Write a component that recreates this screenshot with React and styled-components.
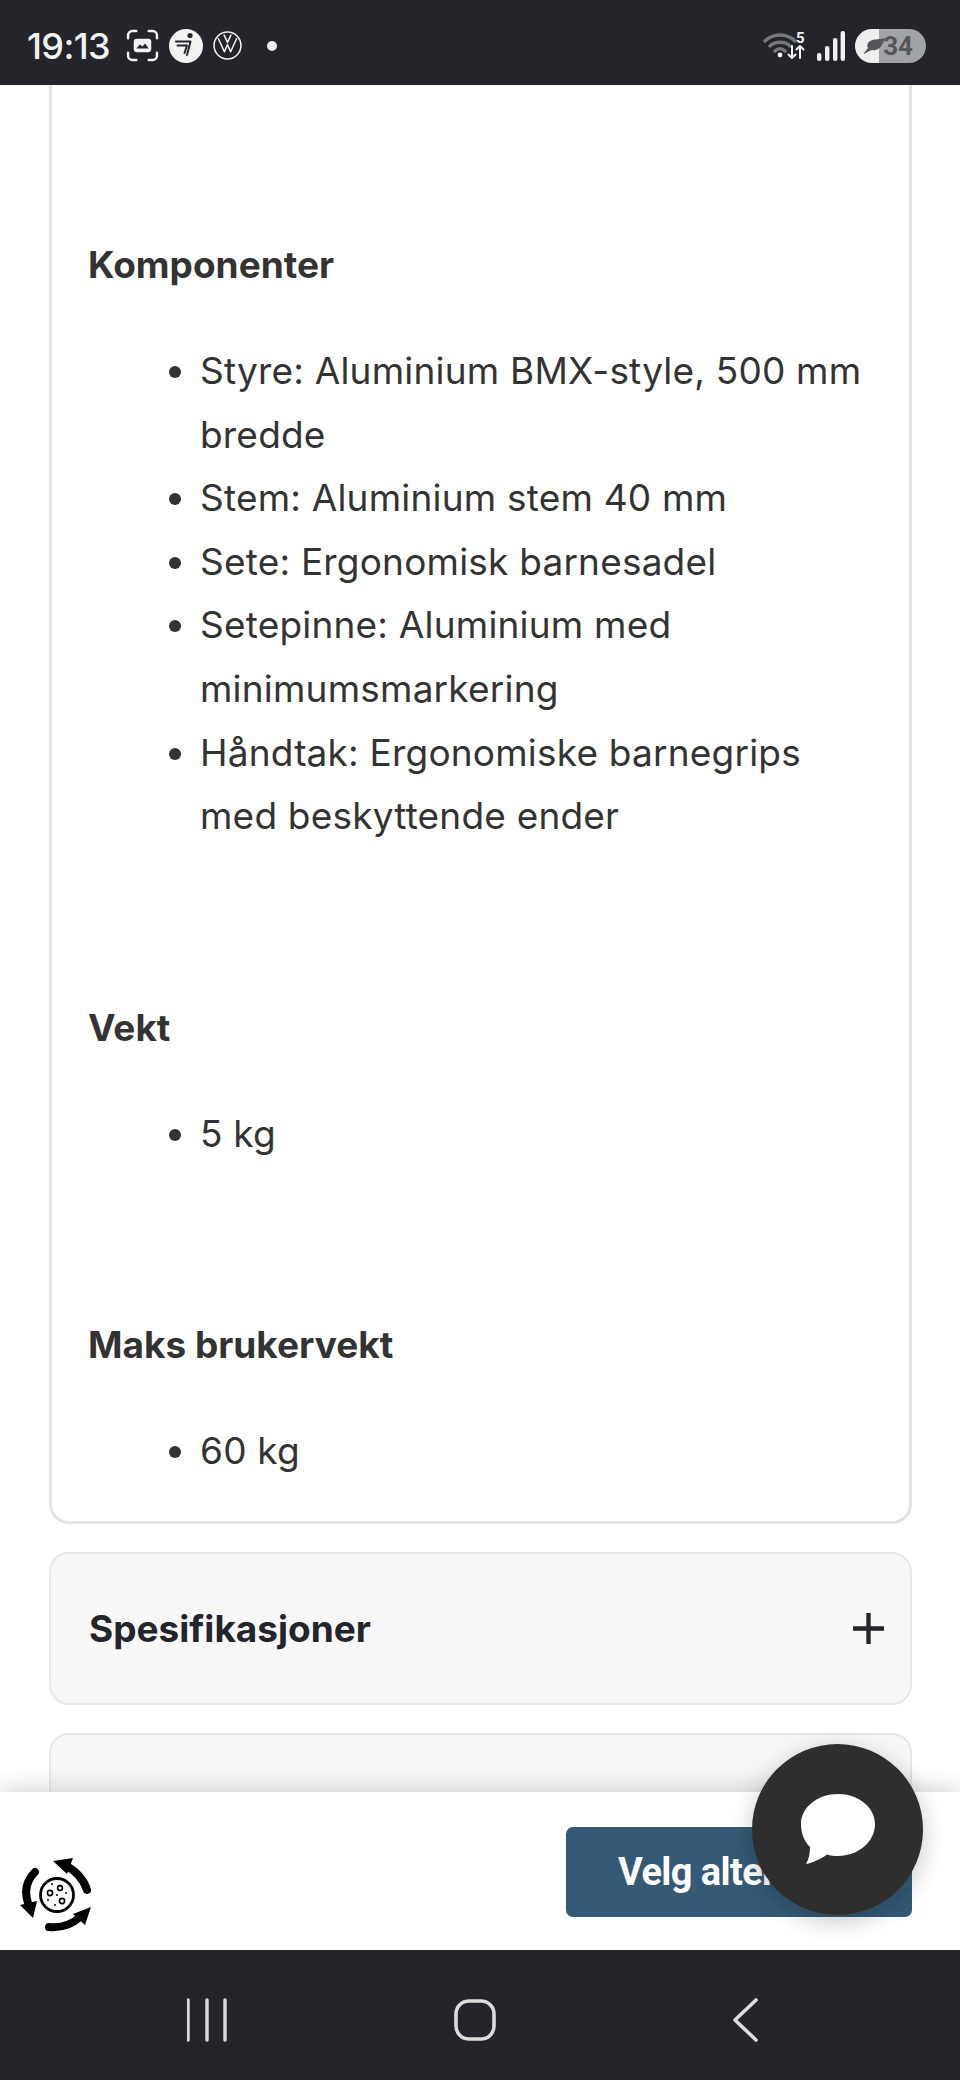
import React from "react";
import styled, { createGlobalStyle } from "styled-components";

const GlobalStyle = createGlobalStyle`
  html, body {
    margin: 0;
    padding: 0;
    background: #fff;
  }
  * {
    box-sizing: border-box;
  }
`;

const Phone = styled.div`
  position: relative;
  width: 960px;
  height: 2080px;
  display: flex;
  flex-direction: column;
  overflow: hidden;
  font-family: Inter, "Liberation Sans", sans-serif;
  background: #fff;
`;

const StatusBar = styled.header`
  height: 85px;
  flex: none;
  display: flex;
  align-items: center;
  justify-content: space-between;
  padding: 6px 34px 0 27px;
  background: #24252b;
  color: #f2f2f2;
`;

const StatusGroup = styled.div`
  display: flex;
  align-items: center;
  gap: ${(p) => p.$gap || 10}px;
`;

const Clock = styled.span`
  font-size: 36px;
  font-weight: 500;
  letter-spacing: -0.6px;
  margin-right: 6px;
  line-height: 1;
`;

const Battery = styled.div`
  position: relative;
  width: 71px;
  height: 34px;
  border-radius: 17px;
  overflow: hidden;
  display: flex;
  align-items: center;
  justify-content: flex-end;
  padding-right: 13px;
  background: linear-gradient(90deg, #efefef 0 24px, #a2a3a6 24px);
  color: #54565b;
  font-family: Roboto, sans-serif;
  font-size: 26px;
  font-weight: 700;
`;

const Content = styled.main`
  flex: 1;
  min-height: 0;
  overflow: hidden;
  padding: 0 48px 0 49px;
  display: flex;
  flex-direction: column;
  gap: 28px;
  color: #333;
`;

const Card = styled.section`
  flex: none;
  height: 1439px;
  padding: 0 36px;
  background: #fff;
  border: 3px solid #e3e3e3;
  border-top: none;
  border-radius: 0 0 20px 20px;
`;

const SpecHeading = styled.h3`
  margin: 0;
  font-size: 37px;
  font-weight: 700;
  line-height: 64px;
  padding-top: 148px;
  color: #333;
`;

const SpecList = styled.ul`
  margin: 42px 0 0;
  padding: 0 0 0 112px;
  font-size: 37px;
  line-height: 63.6px;
  color: #333;
  letter-spacing: 0.2px;
`;

const Accordion = styled.div`
  flex: none;
  height: 153px;
  display: flex;
  align-items: center;
  justify-content: space-between;
  padding: 0 26px 0 38px;
  background: #f7f7f7;
  border: 2px solid #e8e8e8;
  border-radius: 20px;
`;

const AccordionTitle = styled.span`
  font-size: 37px;
  font-weight: 700;
  color: #24252b;
`;

const BottomBar = styled.div`
  position: relative;
  flex: none;
  height: 158px;
  display: flex;
  align-items: center;
  justify-content: space-between;
  padding: 0 48px 0 18px;
  background: #fff;
  box-shadow: 0 -4px 22px rgba(0, 0, 0, 0.16);
`;

const Logo = styled.svg`
  width: 78px;
  height: 78px;
  margin-top: 50px;
`;

const PrimaryButton = styled.button`
  width: 346px;
  height: 90px;
  margin-top: 2px;
  padding: 0 0 0 52px;
  border: none;
  border-radius: 7px;
  background: #345a75;
  color: #fff;
  font-family: Roboto, "Liberation Sans", sans-serif;
  font-size: 38px;
  font-weight: 700;
  letter-spacing: -0.6px;
  text-align: left;
  white-space: nowrap;
  overflow: hidden;
`;

const ChatButton = styled.div`
  position: absolute;
  left: 752px;
  top: 1744px;
  width: 171px;
  height: 171px;
  border-radius: 50%;
  display: flex;
  align-items: center;
  justify-content: center;
  background: #2e2e2e;
  box-shadow: 0 6px 24px rgba(0, 0, 0, 0.22);
`;

const NavBar = styled.nav`
  flex: none;
  height: 130px;
  display: grid;
  grid-template-columns: 187px 58px 209px 42px 236px 26px 1fr;
  align-items: center;
  padding-top: 10px;
  background: #24252b;
`;

const NavIcon = styled.svg`
  grid-column: ${(p) => p.$col};
  height: 44px;
  width: 100%;
  display: block;
`;

const specs = [
  {
    title: "Komponenter",
    items: [
      "Styre: Aluminium BMX-style, 500 mm bredde",
      "Stem: Aluminium stem 40 mm",
      "Sete: Ergonomisk barnesadel",
      "Setepinne: Aluminium med minimumsmarkering",
      "Håndtak: Ergonomiske barnegrips med beskyttende ender",
    ],
  },
  { title: "Vekt", items: ["5 kg"] },
  { title: "Maks brukervekt", items: ["60 kg"] },
];

const ScreenshotIcon = () => (
  <svg width="33" height="33" viewBox="0 0 32 32" fill="none">
    <path
      d="M2 9V6a4 4 0 0 1 4-4h4M22 2h4a4 4 0 0 1 4 4v3M30 23v3a4 4 0 0 1-4 4h-4M10 30H6a4 4 0 0 1-4-4v-3"
      stroke="#f2f2f2"
      strokeWidth="2.4"
      strokeLinecap="round"
    />
    <rect x="7.5" y="9.5" width="17" height="13" rx="3" fill="#f2f2f2" />
    <path d="M10 19l3.5-4 2.5 2 2.5-3 3.5 5z" fill="#24252b" />
  </svg>
);

const ScooterIcon = () => (
  <svg width="34" height="34" viewBox="0 0 34 34">
    <circle cx="17" cy="17" r="17" fill="#f2f2f2" />
    <circle cx="21" cy="6.5" r="2.6" fill="#24252b" />
    <path
      d="M7 12.5h14.5L18 26M8.5 16.5h9.5L15.5 24"
      fill="none"
      stroke="#24252b"
      strokeWidth="2"
      strokeLinecap="round"
      strokeLinejoin="round"
    />
  </svg>
);

const VwIcon = () => (
  <svg width="29" height="29" viewBox="0 0 28 28" fill="none" stroke="#f2f2f2" strokeWidth="1.5">
    <circle cx="14" cy="14" r="13" />
    <path d="M5 7l6 13 3-7 3 7 6-13M10.5 3.5L14 11l3.5-7.5" strokeLinejoin="round" />
  </svg>
);

const WifiIcon = () => (
  <svg width="44" height="32" viewBox="0 0 44 32" fill="none">
    <path
      d="M2 11c8-8 22-8 30 0M7 16c5-5 15-5 20 0M12 21c3-3 7-3 10 0"
      stroke="#77787c"
      strokeWidth="3.4"
      strokeLinecap="round"
    />
    <circle cx="17" cy="25" r="2.4" fill="#f2f2f2" />
    <text x="33" y="13" fill="#f2f2f2" fontFamily="Roboto, sans-serif" fontWeight="700" fontSize="15">
      5
    </text>
    <path
      d="M29 16v12M25.5 24.5L29 28l3.5-3.5M37 28V16M33.5 19.5L37 16l3.5 3.5"
      stroke="#f2f2f2"
      strokeWidth="2"
      strokeLinecap="round"
      strokeLinejoin="round"
    />
  </svg>
);

const SignalIcon = () => (
  <svg width="28" height="30" viewBox="0 0 28 30" fill="#f2f2f2">
    <rect x="0" y="22" width="4.4" height="8" rx="2" />
    <rect x="8" y="15" width="4.4" height="15" rx="2" />
    <rect x="16" y="7" width="4.4" height="23" rx="2" />
    <rect x="23.6" y="0" width="4.4" height="30" rx="2" />
  </svg>
);

const LeafIcon = () => (
  <svg
    width="24"
    height="18"
    viewBox="0 0 24 18"
    style={{ position: "absolute", left: 8, top: 8 }}
    fill="#54565b"
  >
    <path d="M1 17c3-2 5-3 8-4 5 1 10-2 13-12-6 2-14 0-17 5-1 2-1 4 0 5l-4 5z" />
  </svg>
);

const PlusIcon = () => (
  <svg width="31" height="31" viewBox="0 0 31 31" stroke="#24252b" strokeWidth="4.4">
    <path d="M15.5 0v31M0 15.5h31" />
  </svg>
);

const RecycleLogo = () => (
  <Logo viewBox="0 0 78 78" fill="none">
    <circle cx="39" cy="38" r="16.5" stroke="#000" strokeWidth="2.8" />
    <circle cx="32" cy="36" r="2.6" stroke="#000" strokeWidth="1.6" />
    <circle cx="42" cy="31" r="2.4" stroke="#000" strokeWidth="1.6" />
    <circle cx="44" cy="44" r="2.6" stroke="#000" strokeWidth="1.6" />
    <g fill="#000">
      <circle cx="34" cy="27" r="1" />
      <circle cx="39" cy="38" r="1" />
      <circle cx="48" cy="36" r="1" />
      <circle cx="30" cy="43" r="1" />
      <circle cx="37" cy="48" r="1" />
    </g>
    <g stroke="#000" strokeWidth="8" strokeLinecap="round">
      <path d="M17 15C9 23 6 34 10 46" />
      <path d="M69 33C66 23 58 14 47 8" />
      <path d="M31 70c12 1 23-2 32-11" />
    </g>
    <g fill="#000">
      <path d="M2 48l17-4-4 17z" />
      <path d="M35 4l20-3-6 16z" />
      <path d="M55 57l18-7-6 18z" />
    </g>
  </Logo>
);

const ChatBubble = () => (
  <svg width="74" height="70" viewBox="0 0 74 70" fill="#fff" style={{ marginTop: -2 }}>
    <path d="M37 0c20 0 37 13 37 30 0 18-17 32-37 32-4 0-8-.5-11-1.5C20 65 11 69 5 70c3-5 4-11 4-17C3 47 0 39 0 30 0 13 17 0 37 0z" />
  </svg>
);

export default function App() {
  return (
    <Phone>
      <GlobalStyle />
      <StatusBar>
        <StatusGroup $gap={10}>
          <Clock>19:13</Clock>
          <ScreenshotIcon />
          <ScooterIcon />
          <VwIcon />
          <svg width="10" height="10" viewBox="0 0 10 10" style={{ marginLeft: 15 }}>
            <circle cx="5" cy="5" r="5" fill="#f2f2f2" />
          </svg>
        </StatusGroup>
        <StatusGroup $gap={10}>
          <WifiIcon />
          <SignalIcon />
          <Battery>
            <LeafIcon />
            34
          </Battery>
        </StatusGroup>
      </StatusBar>

      <Content>
        <Card>
          {specs.map((spec) => (
            <React.Fragment key={spec.title}>
              <SpecHeading>{spec.title}</SpecHeading>
              <SpecList>
                {spec.items.map((item) => (
                  <li key={item}>{item}</li>
                ))}
              </SpecList>
            </React.Fragment>
          ))}
        </Card>
        <Accordion>
          <AccordionTitle>Spesifikasjoner</AccordionTitle>
          <PlusIcon />
        </Accordion>
        <Accordion />
      </Content>

      <BottomBar>
        <RecycleLogo />
        <PrimaryButton>Velg alternativ</PrimaryButton>
      </BottomBar>

      <NavBar>
        <NavIcon $col={2} viewBox="0 0 58 44" stroke="#dcdcdc" strokeWidth="3.4" strokeLinecap="round">
          <path d="M1 2v40M20 2v40M38 2v40" />
        </NavIcon>
        <NavIcon $col={4} viewBox="0 0 42 44" fill="none" stroke="#dcdcdc" strokeWidth="3.6">
          <rect x="2" y="3" width="38" height="38" rx="13" />
        </NavIcon>
        <NavIcon $col={6} viewBox="0 0 26 44" fill="none" stroke="#dcdcdc" strokeWidth="3.6" strokeLinecap="round" strokeLinejoin="round">
          <path d="M24 2L3 22l21 20" />
        </NavIcon>
      </NavBar>

      <ChatButton>
        <ChatBubble />
      </ChatButton>
    </Phone>
  );
}
